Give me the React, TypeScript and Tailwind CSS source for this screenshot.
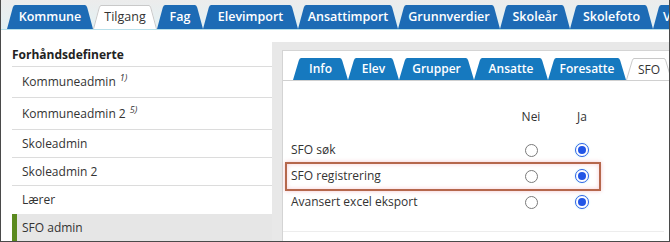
import React from 'react';

interface TabItem {
  label: string;
  width: string;
  active?: boolean;
}

const topTabs: TabItem[] = [
  { label: 'Kommune', width: 'w-[86px]' },
  { label: 'Tilgang', width: 'w-[64px]', active: true },
  { label: 'Fag', width: 'w-[46px]' },
  { label: 'Elevimport', width: 'w-[95px]' },
  { label: 'Ansattimport', width: 'w-[100px]' },
  { label: 'Grunnverdier', width: 'w-[102px]' },
  { label: 'Skoleår', width: 'w-[70px]' },
  { label: 'Skolefoto', width: 'w-[83px]' },
  { label: 'Vurdering', width: 'w-[80px]' },
];

const innerTabs: TabItem[] = [
  { label: 'Info', width: 'w-[55px]' },
  { label: 'Elev', width: 'w-[51px]' },
  { label: 'Grupper', width: 'w-[75px]' },
  { label: 'Ansatte', width: 'w-[74px]' },
  { label: 'Foresatte', width: 'w-[78px]' },
  { label: 'SFO', width: 'w-[46px]', active: true },
];

const roles = [
  { name: 'Kommuneadmin', note: '1)', height: 'h-[31px]' },
  { name: 'Kommuneadmin 2', note: '5)', height: 'h-[32px]' },
  { name: 'Skoleadmin', height: 'h-[28px]' },
  { name: 'Skoleadmin 2', height: 'h-[28px]' },
  { name: 'Lærer', height: 'h-[28px]', last: true },
];

const rights = [
  { name: 'SFO søk' },
  { name: 'SFO registrering', marked: true },
  { name: 'Avansert excel eksport' },
];

const Slant: React.FC<{ side: 'left' | 'right'; h: number; fill: string; stroke?: string }> = ({
  side,
  h,
  fill,
  stroke,
}) => {
  const shape =
    side === 'left'
      ? `M0 ${h} L5.8 2.6 Q6.5 0 8 0 L8 ${h} Z`
      : `M0 0 Q1.5 0 2.2 2.6 L8 ${h} L0 ${h} Z`;
  const edge =
    side === 'left' ? `M0.5 ${h} L6.2 2.8 Q6.9 0.5 8 0.5` : `M0 0.5 Q1.1 0.5 1.8 2.8 L7.5 ${h}`;
  return (
    <svg width={8} height={h} viewBox={`0 0 8 ${h}`} className="block shrink-0">
      <path d={shape} fill={fill} />
      {stroke && <path d={edge} fill="none" stroke={stroke} strokeWidth={1} />}
    </svg>
  );
};

const Tab: React.FC<{ tab: TabItem; h: number; blue: string; inner?: boolean }> = ({ tab, h, blue, inner }) => {
  const fill = tab.active ? '#ffffff' : blue;
  return (
    <div className={`flex shrink-0 ${tab.width}`}>
      <Slant side="left" h={h} fill={fill} stroke={tab.active ? '#c9c9c9' : undefined} />
      <div
        className={`flex-1 flex items-center justify-center whitespace-nowrap ${
          tab.active
            ? 'bg-white border-t border-[#c9c9c9] text-[#333] font-normal'
            : inner
              ? 'bg-[#1679bf] text-white font-semibold'
              : 'bg-[#1d6bb5] text-white font-semibold'
        } ${inner ? 'text-[12px]' : 'text-[12.5px]'}`}
      >
        {tab.label}
      </div>
      <Slant side="right" h={h} fill={fill} stroke={tab.active ? '#c9c9c9' : undefined} />
    </div>
  );
};

const Radio: React.FC<{ checked?: boolean }> = ({ checked }) =>
  checked ? (
    <div className="w-[14px] h-[14px] rounded-full border-[1.5px] border-[#2f63e6] bg-white flex items-center justify-center shadow-[0_0_2px_#b8ecf7]">
      <div className="w-[8px] h-[8px] rounded-full bg-[#2256e6]" />
    </div>
  ) : (
    <div className="w-[13px] h-[13px] rounded-full border border-[#7a7a7a] bg-white" />
  );

export default function App() {
  return (
    <div
      className="w-[670px] h-[242px] overflow-hidden flex flex-col bg-white border-x border-b border-[#4a4a4a] text-[#333]"
      style={{ fontFamily: '"Open Sans", "Liberation Sans", sans-serif' }}
    >
      {/* top tabs */}
      <div className="h-[30px] shrink-0 flex items-end pl-[6px] bg-linear-to-b from-[#ececec] to-[#e2f1f4] border-b border-[#b9e0ea] overflow-hidden">
        {topTabs.map((tab) => (
          <Tab key={tab.label} tab={tab} h={24} blue="#1d6bb5" />
        ))}
      </div>

      <div className="flex flex-1 min-h-0">
        {/* role list */}
        <aside className="w-[271px] shrink-0 flex flex-col pl-[11px]">
          <div className="h-[37px] shrink-0 border-b border-[#dcdcdc] pt-[16px] leading-[18px] text-[12px] font-bold text-[#222]">
            Forhåndsdefinerte
          </div>
          {roles.map((role) => (
            <div
              key={role.name}
              className={`${role.height} shrink-0 flex items-center pl-[10px] text-[12px] ${
                role.last ? '' : 'border-b border-[#dcdcdc]'
              }`}
            >
              {role.name}
              {role.note && (
                <span className="ml-[4px] -mt-[9px] text-[9px] italic leading-none text-[#333]">{role.note}</span>
              )}
            </div>
          ))}
          <div className="flex-1 flex items-center bg-[#e6e6e6] border-l-[5px] border-[#5b8a1f] pl-[5px] text-[12px]">
            SFO admin
          </div>
        </aside>

        {/* rights panel */}
        <section className="flex-1 flex flex-col pt-[12px]">
          <div className="flex-1 flex flex-col bg-[#e8e8e8] pl-[10px] pt-[8px]">
            <div className="flex-1 flex flex-col bg-white border-l border-t border-[#d4d4d4]">
              <div className="h-[30px] shrink-0 flex items-end pl-[10px] border-b border-[#d0d0d0] overflow-hidden">
                {innerTabs.map((tab) => (
                  <Tab key={tab.label} tab={tab} h={22} blue="#1679bf" inner />
                ))}
              </div>

              <div className="pl-[8px] pt-[23px]">
                <div className="grid grid-cols-[215px_50px_52px] h-[26px] items-center text-[12px]">
                  <span />
                  <span className="text-center">Nei</span>
                  <span className="text-center">Ja</span>
                </div>
                <div className="h-[7px]" />
                {rights.map((right) => (
                  <div
                    key={right.name}
                    className="relative grid grid-cols-[215px_50px_52px] h-[26px] items-center text-[12px]"
                  >
                    <span>{right.name}</span>
                    <span className="flex justify-center">
                      <Radio />
                    </span>
                    <span className="flex justify-center">
                      <Radio checked />
                    </span>
                    {right.marked && (
                      <div className="absolute left-[-6px] top-[-1px] w-[316px] h-[29px] border-2 border-[#b5674c] shadow-[0_0_4px_rgba(220,90,110,0.35),inset_0_0_4px_rgba(230,110,130,0.35)]" />
                    )}
                  </div>
                ))}
              </div>
              <div className="mt-[16px] mr-[8px] border-b border-[#ededed]" />
            </div>
          </div>
        </section>
      </div>
    </div>
  );
}
